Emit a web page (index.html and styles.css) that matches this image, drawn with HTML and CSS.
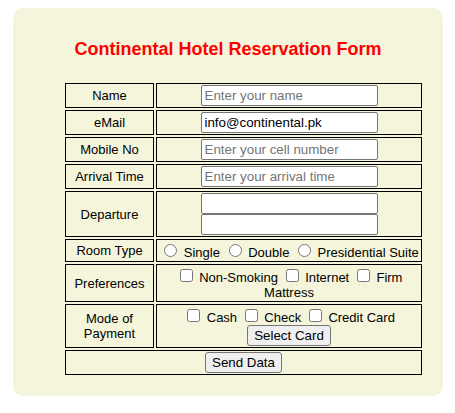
FILE: index.html
```html
<!DOCTYPE html>
<html>
<head>
<meta charset="utf-8">
<title>Continental Hotel Reservation Form</title>
<link rel="stylesheet" href="styles.css">
</head>
<body>
<div class="card">
  <h1 class="title">Continental Hotel Reservation Form</h1>
  <form class="form">
    <table class="grid">
      <tr>
        <td class="label">Name</td>
        <td class="field"><input class="text" type="text" placeholder="Enter your name"></td>
      </tr>
      <tr>
        <td class="label">eMail</td>
        <td class="field"><input class="text" type="text" value="info@continental.pk"></td>
      </tr>
      <tr>
        <td class="label">Mobile No</td>
        <td class="field"><input class="text" type="text" placeholder="Enter your cell number"></td>
      </tr>
      <tr>
        <td class="label">Arrival Time</td>
        <td class="field"><input class="text" type="text" placeholder="Enter your arrival time"></td>
      </tr>
      <tr>
        <td class="label">Departure</td>
        <td class="field"><input class="text" type="text"><input class="text" type="text"></td>
      </tr>
      <tr>
        <td class="label">Room Type</td>
        <td class="field nowrap"><input type="radio" name="room"> Single <input type="radio" name="room"> Double <input type="radio" name="room"> Presidential Suite</td>
      </tr>
      <tr>
        <td class="label">Preferences</td>
        <td class="field"><input type="checkbox"> Non-Smoking <input type="checkbox"> Internet <input type="checkbox"> Firm Mattress</td>
      </tr>
      <tr>
        <td class="label">Mode of Payment</td>
        <td class="field"><input type="checkbox"> Cash <input type="checkbox"> Check <input type="checkbox"> Credit Card<br><button class="btn" type="button">Select Card</button></td>
      </tr>
      <tr>
        <td class="field" colspan="2"><button class="btn" type="button">Send Data</button></td>
      </tr>
    </table>
  </form>
</div>
</body>
</html>
```
FILE: styles.css
```css
body {
  margin: 8px;
  font-family: "Liberation Sans", Arial, sans-serif;
  color: #000;
}

.card {
  box-sizing: border-box;
  width: 430px;
  margin-left: 5px;
  padding: 31px 0 19px;
  background: #f5f5dc;
  border-radius: 10px;
}

.title {
  margin: 0;
  text-align: center;
  color: #ff0000;
  font-size: 18px;
  line-height: 20px;
  font-weight: bold;
}

.form {
  margin: 22px 0 0 50px;
}

.grid {
  width: 361px;
  border-spacing: 2px;
  table-layout: fixed;
  font-size: 13px;
}

.grid td {
  border: 1px solid #000;
  padding: 1px;
  text-align: center;
  vertical-align: middle;
}

.label {
  width: 85px;
}

.nowrap {
  white-space: nowrap;
}

.text {
  display: block;
  box-sizing: border-box;
  width: 177px;
  height: 21px;
  margin: 0 auto;
  padding: 1px 3px;
  border: 1px solid #767676;
  border-radius: 2px;
  background: #fff;
  color: #000;
  font-family: "Liberation Sans", Arial, sans-serif;
  font-size: 13.33px;
}

.text::placeholder {
  color: #757575;
}

.btn {
  box-sizing: border-box;
  height: 21px;
  padding: 1px 6px;
  border: 1px solid #767676;
  border-radius: 3px;
  background: #efefef;
  color: #000;
  font-family: "Liberation Sans", Arial, sans-serif;
  font-size: 13.33px;
  line-height: 15px;
  vertical-align: top;
}
```
